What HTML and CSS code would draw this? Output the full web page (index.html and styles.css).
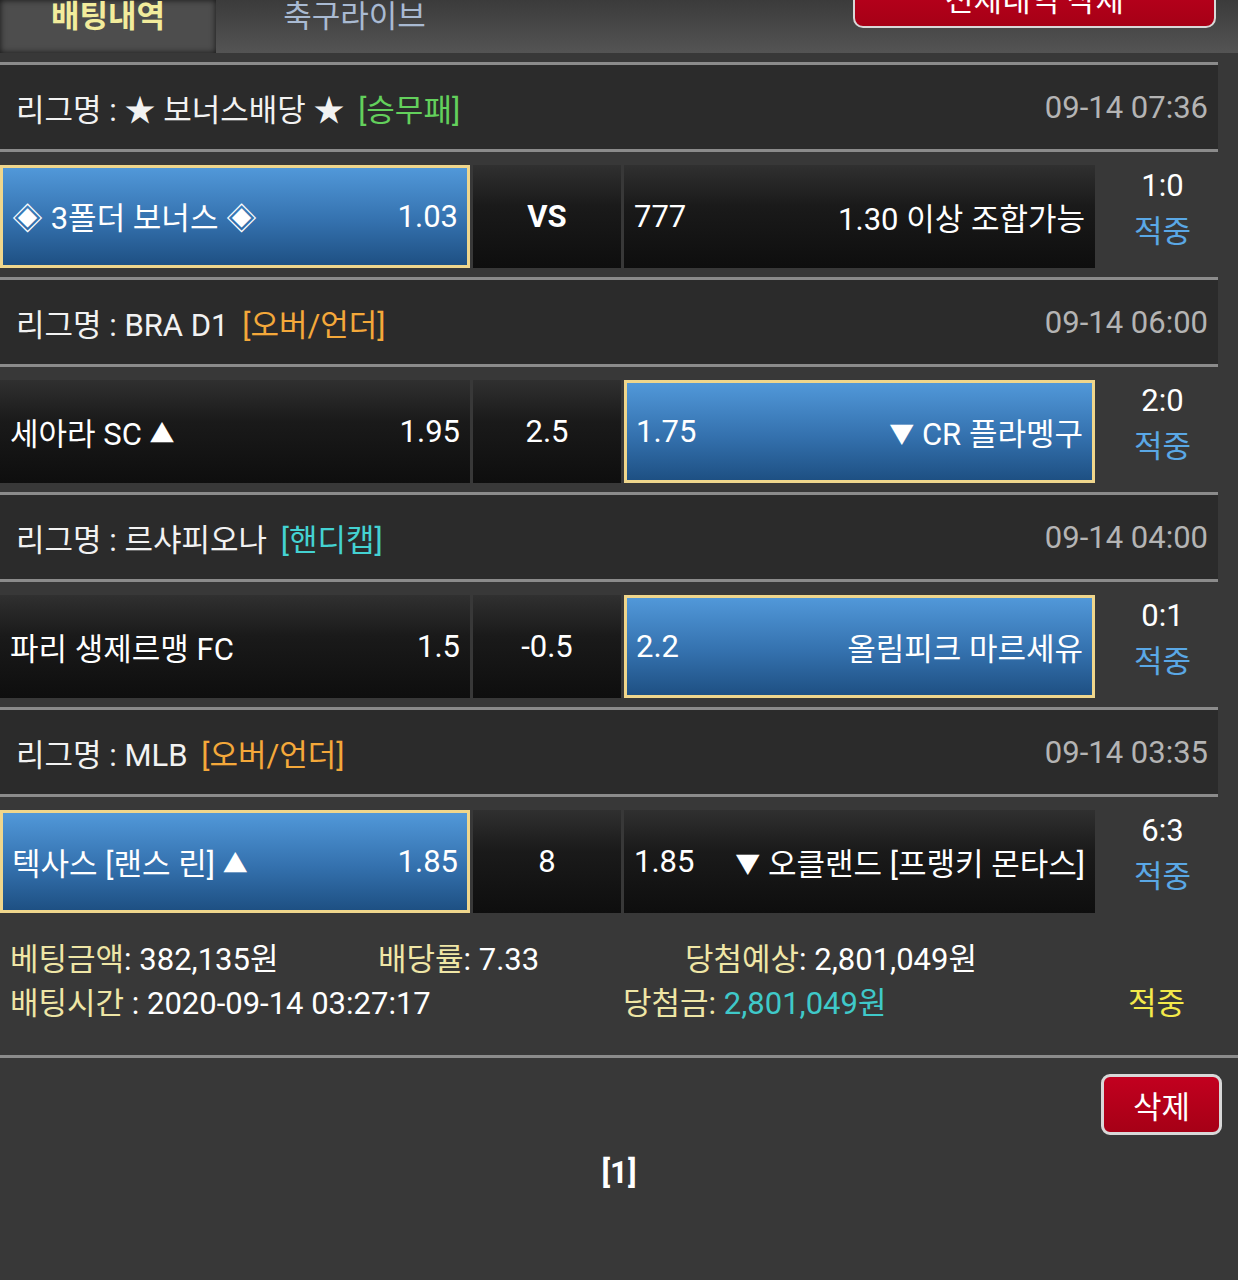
FILE: index.html
```html
<!DOCTYPE html>
<html lang="ko">
<head>
<meta charset="utf-8">
<title>배팅내역</title>
<link rel="stylesheet" href="styles.css">
</head>
<body>
<div class="page">
  <header class="topbar">
    <div class="tab tab-active">배팅내역</div>
    <div class="tab tab-live">축구라이브</div>
    <button class="btn-red btn-all">전체내역 삭제</button>
  </header>

  <div class="list">
    <section class="bet">
      <div class="league">
        <div class="league-name">리그명 : ★ 보너스배당 ★ <span class="tag tag-green">[승무패]</span></div>
        <div class="league-time">09-14 07:36</div>
      </div>
      <div class="match">
        <div class="pick pick-home selected"><span>◈ 3폴더 보너스 ◈</span><span>1.03</span></div>
        <div class="pick pick-mid"><b>VS</b></div>
        <div class="pick pick-away"><span>777</span><span>1.30 이상 조합가능</span></div>
        <div class="result"><div>1:0</div><div class="hit">적중</div></div>
      </div>
    </section>

    <section class="bet">
      <div class="league">
        <div class="league-name">리그명 : BRA D1 <span class="tag tag-orange">[오버/언더]</span></div>
        <div class="league-time">09-14 06:00</div>
      </div>
      <div class="match">
        <div class="pick pick-home"><span>세아라 SC <span class="arrow">▲</span></span><span>1.95</span></div>
        <div class="pick pick-mid"><span>2.5</span></div>
        <div class="pick pick-away selected"><span>1.75</span><span><span class="arrow">▼</span> CR 플라멩구</span></div>
        <div class="result"><div>2:0</div><div class="hit">적중</div></div>
      </div>
    </section>

    <section class="bet">
      <div class="league">
        <div class="league-name">리그명 : 르샤피오나 <span class="tag tag-cyan">[핸디캡]</span></div>
        <div class="league-time">09-14 04:00</div>
      </div>
      <div class="match">
        <div class="pick pick-home"><span>파리 생제르맹 FC</span><span>1.5</span></div>
        <div class="pick pick-mid"><span>-0.5</span></div>
        <div class="pick pick-away selected"><span>2.2</span><span>올림피크 마르세유</span></div>
        <div class="result"><div>0:1</div><div class="hit">적중</div></div>
      </div>
    </section>

    <section class="bet">
      <div class="league">
        <div class="league-name">리그명 : MLB <span class="tag tag-orange">[오버/언더]</span></div>
        <div class="league-time">09-14 03:35</div>
      </div>
      <div class="match">
        <div class="pick pick-home selected"><span>텍사스 [랜스 린] <span class="arrow">▲</span></span><span>1.85</span></div>
        <div class="pick pick-mid"><span>8</span></div>
        <div class="pick pick-away"><span>1.85</span><span><span class="arrow">▼</span> 오클랜드 [프랭키 몬타스]</span></div>
        <div class="result"><div>6:3</div><div class="hit">적중</div></div>
      </div>
    </section>

    <div class="summary">
      <div class="sum-row">
        <div class="c-amount"><span class="lbl">베팅금액</span>: 382,135원</div>
        <div class="c-rate"><span class="lbl">배당률</span>: 7.33</div>
        <div><span class="lbl">당첨예상</span>: 2,801,049원</div>
      </div>
      <div class="sum-row">
        <div class="c-time"><span class="lbl">배팅시간</span> : 2020-09-14 03:27:17</div>
        <div class="c-win"><span class="lbl">당첨금:</span> <span class="won">2,801,049원</span></div>
        <div class="ok">적중</div>
      </div>
    </div>
  </div>

  <div class="actions">
    <button class="btn-red btn-del">삭제</button>
  </div>
  <div class="pager">[1]</div>
</div>
</body>
</html>
```

FILE: styles.css
```css
* {
  box-sizing: border-box;
}

html,
body {
  margin: 0;
  padding: 0;
}

body {
  background: #383838;
  color: #ffffff;
  font-family: Roboto, "Noto Sans CJK KR", sans-serif;
  font-size: 31px;
  min-height: 1280px;
}

.page {
  width: 1238px;
}

/* top bar */
.topbar {
  display: flex;
  align-items: flex-start;
  height: 53px;
  background: linear-gradient(#3b3b3b, #545454);
}

.tab {
  height: 53px;
  line-height: 34px;
  text-align: center;
  font-size: 31px;
  color: #a9bad2;
}

.tab-active {
  width: 216px;
  background: #4d4d4d;
  box-shadow: inset 0 0 6px rgba(0, 0, 0, 0.75);
  color: #f2ec9c;
  font-weight: 700;
}

.tab-live {
  width: 277px;
}

.btn-red {
  font-family: inherit;
  font-size: 31px;
  color: #ffffff;
  background: linear-gradient(#c2001f, #a60016);
  border: 2px solid #d8d8d8;
  border-radius: 10px;
  padding: 0;
  cursor: pointer;
}

.btn-all {
  margin-left: auto;
  margin-right: 22px;
  margin-top: -33px;
  width: 363px;
  height: 61px;
}

/* bet list */
.list {
  margin-top: 9px;
}

.league {
  width: 1218px;
  height: 90px;
  border-top: 3px solid #8b8b8b;
  border-bottom: 3px solid #8b8b8b;
  background: #2b2b2b;
  display: flex;
  align-items: center;
  justify-content: space-between;
  padding: 0 10px 0 16px;
  color: #f2f2f2;
}

.tag {
  margin-left: 6px;
}

.tag-green {
  color: #63d05c;
}

.tag-orange {
  color: #f4a83a;
}

.tag-cyan {
  color: #44d2d2;
}

.league-time {
  color: #b4b4b4;
}

.match {
  display: flex;
  height: 125px;
  padding: 13px 0 9px;
}

.pick {
  height: 103px;
  display: flex;
  align-items: center;
  justify-content: space-between;
  padding: 0 10px;
  background: linear-gradient(#303030 0%, #1a1a1a 40%, #0e0e0e 100%);
  white-space: nowrap;
}

.pick-home {
  width: 470px;
  margin-right: 3px;
}

.pick-mid {
  width: 148px;
  margin-right: 3px;
  justify-content: center;
}

.pick-away {
  width: 471px;
}

.selected {
  background: linear-gradient(#5198d9, #3471ae 55%, #1e5083);
  border: 3px solid #efd68c;
  padding: 0 9px;
}

.arrow {
  font-size: 25px;
  vertical-align: 2px;
}

.result {
  width: 135px;
  text-align: center;
  line-height: 46px;
  margin-top: -2px;
}

.hit {
  color: #5aa8e6;
}

/* summary */
.summary {
  padding: 16px 0 29px 10px;
  border-bottom: 3px solid #8b8b8b;
  line-height: 44px;
}

.sum-row {
  display: flex;
  white-space: nowrap;
}

.c-amount {
  width: 368px;
}

.c-rate {
  width: 307px;
}

.c-time {
  width: 613px;
}

.c-win {
  width: 505px;
}

.lbl {
  color: #efe6a6;
}

.won {
  color: #3fc9c9;
}

.ok {
  color: #f3ea4a;
}

/* bottom */
.actions {
  display: flex;
  justify-content: flex-end;
  padding: 16px 16px 0;
}

.btn-del {
  width: 121px;
  height: 61px;
  border-width: 3px;
  border-radius: 9px;
}

.pager {
  text-align: center;
  font-weight: 700;
  font-size: 31px;
  line-height: 40px;
  margin-top: 18px;
}
```
